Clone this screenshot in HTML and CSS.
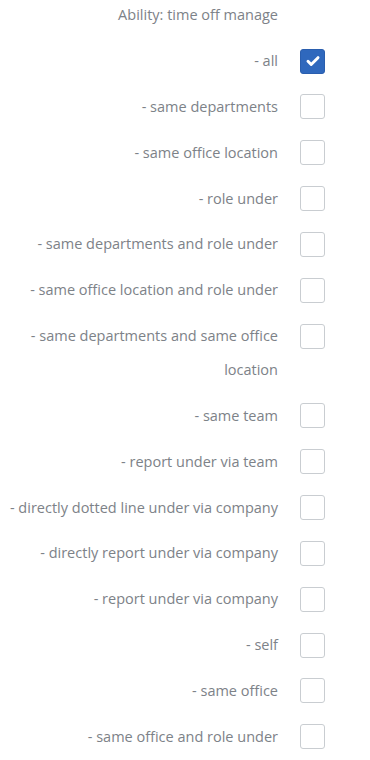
FILE: index.html
```html
<!DOCTYPE html>
<html lang="en">
<head>
    <meta charset="UTF-8">
    <meta name="viewport" content="width=device-width, initial-scale=1.0">
    <title>Ability: time off manage</title>
    <link rel="stylesheet" href="styles.css">
</head>
<body>
    <div class="ability-panel">
        <div class="ability-title">Ability: time off manage</div>

        <div class="ability-list">
            <label class="ability-row">
                <span class="ability-label">- all</span>
                <span class="box checked">
                    <svg viewBox="0 0 24 24" width="16" height="16"><path d="M4.5 12.5l4.8 4.8L19.5 7" fill="none" stroke="#fff" stroke-width="4.4" stroke-linecap="round" stroke-linejoin="round"/></svg>
                </span>
            </label>
            <label class="ability-row">
                <span class="ability-label">- same departments</span>
                <span class="box"></span>
            </label>
            <label class="ability-row">
                <span class="ability-label">- same office location</span>
                <span class="box"></span>
            </label>
            <label class="ability-row">
                <span class="ability-label">- role under</span>
                <span class="box"></span>
            </label>
            <label class="ability-row">
                <span class="ability-label">- same departments and role under</span>
                <span class="box"></span>
            </label>
            <label class="ability-row">
                <span class="ability-label">- same office location and role under</span>
                <span class="box"></span>
            </label>
            <label class="ability-row">
                <span class="ability-label">- same departments and same office location</span>
                <span class="box"></span>
            </label>
            <label class="ability-row">
                <span class="ability-label">- same team</span>
                <span class="box"></span>
            </label>
            <label class="ability-row">
                <span class="ability-label">- report under via team</span>
                <span class="box"></span>
            </label>
            <label class="ability-row">
                <span class="ability-label">- directly dotted line under via company</span>
                <span class="box"></span>
            </label>
            <label class="ability-row">
                <span class="ability-label">- directly report under via company</span>
                <span class="box"></span>
            </label>
            <label class="ability-row">
                <span class="ability-label">- report under via company</span>
                <span class="box"></span>
            </label>
            <label class="ability-row">
                <span class="ability-label">- self</span>
                <span class="box"></span>
            </label>
            <label class="ability-row">
                <span class="ability-label">- same office</span>
                <span class="box"></span>
            </label>
            <label class="ability-row">
                <span class="ability-label">- same office and role under</span>
                <span class="box"></span>
            </label>
        </div>
    </div>
</body>
</html>
```

FILE: styles.css
```css
body {
    margin: 0;
    background: #fff;
    font-family: "Open Sans", sans-serif;
    font-size: 14.5px;
    color: #7d8288;
}

.ability-panel {
    padding: 0 45px 0 8px;
}

/* title sits in the label column, right aligned */
.ability-title {
    width: 270px;
    text-align: right;
    line-height: 30px;
    margin-bottom: 14px;
}

.ability-list {
    display: flex;
    flex-direction: column;
    gap: 11.85px;
}

.ability-row {
    display: grid;
    grid-template-columns: 270px 25px;
    column-gap: 22px;
    align-items: start;
    cursor: pointer;
}

.ability-label {
    text-align: right;
    line-height: 34px;
}

.box {
    width: 25px;
    height: 25px;
    margin-top: 4.5px;
    box-sizing: border-box;
    border: 1px solid #c9cdd1;
    border-radius: 3px;
    background: #fff;
    display: flex;
    align-items: center;
    justify-content: center;
}

.box.checked {
    background: #2f68bd;
    border-color: #2a5eae;
}
```
